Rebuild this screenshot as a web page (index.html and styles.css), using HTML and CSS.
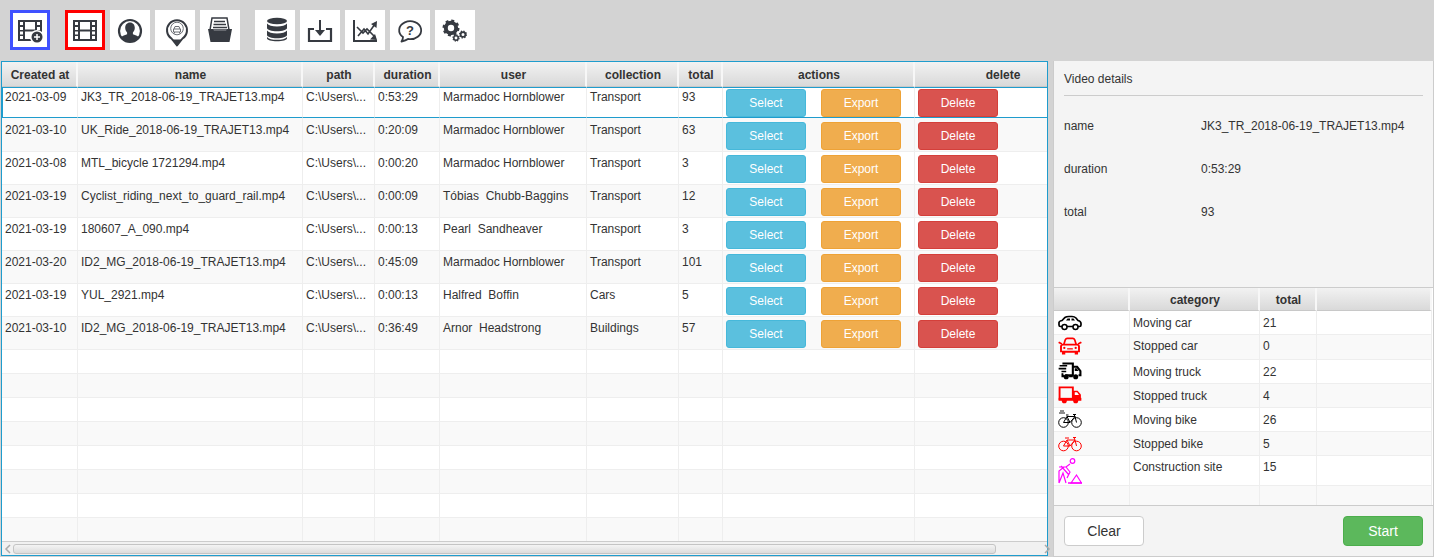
FILE: index.html
```html
<!DOCTYPE html>
<html lang="en">
<head>
<meta charset="utf-8">
<title>Video list</title>
<link rel="stylesheet" href="styles.css">
</head>
<body>
<svg class="defs" width="0" height="0">
  <symbol id="film" viewBox="0 0 40 40">
    <path fill-rule="evenodd" d="M8 10H32V31H8ZM10 12V15H13V12ZM10 17V20H13V17ZM10 21.500V24.500H13V21.500ZM10 26V29H13V26ZM27 12V15H30V12ZM27 17V20H30V17ZM27 21.500V24.500H30V21.500ZM27 26V29H30V26ZM15 12V19.500H25V12ZM15 21.500V29H25V21.500Z"/>
  </symbol>
</svg>
<div class="app">
  <div class="toolbar">
    <div class="tool-group">
      <button class="tool tool-blue"><svg class="ico" viewBox="0 0 40 40"><use href="#film" x="0" y="0" width="40" height="40"/><circle cx="27" cy="27" r="7" fill="#fff"/><circle cx="27" cy="27" r="5.500"/><path d="M27 24V30M24 27H30" stroke="#fff" stroke-width="1.500"/></svg></button>
    </div>
    <div class="tool-group">
      <button class="tool tool-red"><svg class="ico" viewBox="0 0 40 40"><use href="#film" width="40" height="40"/></svg></button>
      <button class="tool"><svg class="ico" viewBox="0 0 40 40"><circle cx="20" cy="21" r="11" fill="none" stroke-width="2.200" class="st"/><path d="M20 12.500c3 0 4.800 2.400 4.800 5.300 0 2-.9 3.700-1.900 4.800v1.600c2.600 1 5.600 2 6.600 3.500A10 10 0 0 1 20 31.300 10 10 0 0 1 10.500 27.700c1-1.500 4-2.500 6.600-3.500v-1.600c-1-1.100-1.900-2.800-1.900-4.800 0-2.900 1.800-5.300 4.800-5.300Z"/></svg></button>
      <button class="tool"><svg class="ico" viewBox="0 0 40 40"><path d="M22 35.500l-5.500-7A10 10 0 1 1 27.500 28.500Z" fill="none" class="st" stroke-width="2" stroke-linejoin="round"/><path d="M22 35.500l-4.500-6h9Z"/><circle cx="22" cy="18.500" r="6.300" fill="none" class="thin" stroke-width="1"/><path d="M19 19L20 16.500H24L25 19M18.500 19H25.500V22H18.500ZM19.500 22V23.500M24.500 22V23.500" fill="none" class="thin" stroke-width="1"/></svg></button>
      <button class="tool"><svg class="ico" viewBox="0 0 40 40"><path d="M12 8H27L29 20H10Z" fill="none" class="st" stroke-width="1.500"/><path d="M14 11.500H25M13.500 14.500H26M13 17.500H27" class="st" stroke-width="1.300"/><path d="M8 19H13L14 21H26L27 19H32L29.500 32H10.500Z"/></svg></button>
    </div>
    <div class="tool-group">
      <button class="tool"><svg class="ico" viewBox="0 0 40 40"><ellipse cx="22" cy="11" rx="10" ry="3.300"/><path d="M12 13.500c1.500 2 5 3 10 3s8.500-1 10-3V18c0 1.700-4.500 3.300-10 3.300S12 19.700 12 18ZM12 20.500c1.500 2 5 3 10 3s8.500-1 10-3V25c0 1.700-4.500 3.300-10 3.300S12 26.700 12 25ZM12 27c1.500 2 5 2.800 10 2.800s8.500-.8 10-2.800v1.500c0 1.500-4.500 2.800-10 2.800s-10-1.300-10-2.800Z"/></svg></button>
      <button class="tool"><svg class="ico" viewBox="0 0 40 40"><path d="M14 19H9V31H31V19H26" fill="none" class="st" stroke-width="2.200"/><path d="M20 10V22" class="st" stroke-width="2"/><path d="M15 20H25L20 26Z"/></svg></button>
      <button class="tool"><svg class="ico" viewBox="0 0 40 40"><path d="M9 10V31H32" fill="none" class="st" stroke-width="2"/><path d="M12 17L18 23L22 19L30 27M13 26L19 19L23 24L30 14" fill="none" class="st" stroke-width="1.600"/><path d="M32 11L31.500 18L26 14ZM32 30L25 29.500L30 24Z"/></svg></button>
      <button class="tool"><svg class="ico" viewBox="0 0 40 40"><path d="M13 27A11 9 0 1 1 18 29C16 30.500 14 31 11.500 31.500C12.500 30 13 29 13 27Z" fill="none" class="st" stroke-width="1.800" stroke-linejoin="round"/><text x="20" y="25" class="qmark">?</text></svg></button>
      <button class="tool"><svg class="ico" viewBox="0 0 40 40"><circle cx="16" cy="18" r="5.200" fill="none" class="st" stroke-width="4"/><circle cx="16" cy="18" r="7" fill="none" class="st" stroke-width="3" stroke-dasharray="2.800 2.700"/><circle cx="28" cy="24.500" r="2.400" fill="none" class="st" stroke-width="1.800"/><circle cx="28" cy="24.500" r="3.300" fill="none" class="st" stroke-width="1.500" stroke-dasharray="1.300 1.290"/><circle cx="21" cy="28" r="2.200" fill="none" class="st" stroke-width="1.500"/><circle cx="21" cy="28" r="3" fill="none" class="st" stroke-width="1.300" stroke-dasharray="1.200 1.150"/></svg></button>
    </div>
  </div>

  <div class="main">
    <section class="list-pane">
      <div class="table-clip">
        <table class="grid video-table">
          <colgroup>
            <col class="c-date"><col class="c-name"><col class="c-path"><col class="c-dur"><col class="c-user"><col class="c-coll"><col class="c-total"><col class="c-actions"><col class="c-delete">
          </colgroup>
          <thead>
            <tr><th>Created at</th><th>name</th><th>path</th><th>duration</th><th>user</th><th>collection</th><th>total</th><th>actions</th><th>delete</th></tr>
          </thead>
          <tbody>
            <tr class="row selected"><td>2021-03-09</td><td>JK3_TR_2018-06-19_TRAJET13.mp4</td><td>C:\Users\...</td><td>0:53:29</td><td>Marmadoc Hornblower</td><td>Transport</td><td>93</td><td class="btns"><div class="pair"><button class="btn info">Select</button><button class="btn warn">Export</button></div></td><td class="btns"><button class="btn danger">Delete</button></td></tr>
            <tr class="row"><td>2021-03-10</td><td>UK_Ride_2018-06-19_TRAJET13.mp4</td><td>C:\Users\...</td><td>0:20:09</td><td>Marmadoc Hornblower</td><td>Transport</td><td>63</td><td class="btns"><div class="pair"><button class="btn info">Select</button><button class="btn warn">Export</button></div></td><td class="btns"><button class="btn danger">Delete</button></td></tr>
            <tr class="row"><td>2021-03-08</td><td>MTL_bicycle 1721294.mp4</td><td>C:\Users\...</td><td>0:00:20</td><td>Marmadoc Hornblower</td><td>Transport</td><td>3</td><td class="btns"><div class="pair"><button class="btn info">Select</button><button class="btn warn">Export</button></div></td><td class="btns"><button class="btn danger">Delete</button></td></tr>
            <tr class="row"><td>2021-03-19</td><td>Cyclist_riding_next_to_guard_rail.mp4</td><td>C:\Users\...</td><td>0:00:09</td><td>Tóbias&nbsp; Chubb-Baggins</td><td>Transport</td><td>12</td><td class="btns"><div class="pair"><button class="btn info">Select</button><button class="btn warn">Export</button></div></td><td class="btns"><button class="btn danger">Delete</button></td></tr>
            <tr class="row"><td>2021-03-19</td><td>180607_A_090.mp4</td><td>C:\Users\...</td><td>0:00:13</td><td>Pearl&nbsp; Sandheaver</td><td>Transport</td><td>3</td><td class="btns"><div class="pair"><button class="btn info">Select</button><button class="btn warn">Export</button></div></td><td class="btns"><button class="btn danger">Delete</button></td></tr>
            <tr class="row"><td>2021-03-20</td><td>ID2_MG_2018-06-19_TRAJET13.mp4</td><td>C:\Users\...</td><td>0:45:09</td><td>Marmadoc Hornblower</td><td>Transport</td><td>101</td><td class="btns"><div class="pair"><button class="btn info">Select</button><button class="btn warn">Export</button></div></td><td class="btns"><button class="btn danger">Delete</button></td></tr>
            <tr class="row"><td>2021-03-19</td><td>YUL_2921.mp4</td><td>C:\Users\...</td><td>0:00:13</td><td>Halfred&nbsp; Boffin</td><td>Cars</td><td>5</td><td class="btns"><div class="pair"><button class="btn info">Select</button><button class="btn warn">Export</button></div></td><td class="btns"><button class="btn danger">Delete</button></td></tr>
            <tr class="row"><td>2021-03-10</td><td>ID2_MG_2018-06-19_TRAJET13.mp4</td><td>C:\Users\...</td><td>0:36:49</td><td>Arnor&nbsp; Headstrong</td><td>Buildings</td><td>57</td><td class="btns"><div class="pair"><button class="btn info">Select</button><button class="btn warn">Export</button></div></td><td class="btns"><button class="btn danger">Delete</button></td></tr>
            <tr class="empty"><td></td><td></td><td></td><td></td><td></td><td></td><td></td><td></td><td></td></tr>
            <tr class="empty"><td></td><td></td><td></td><td></td><td></td><td></td><td></td><td></td><td></td></tr>
            <tr class="empty"><td></td><td></td><td></td><td></td><td></td><td></td><td></td><td></td><td></td></tr>
            <tr class="empty"><td></td><td></td><td></td><td></td><td></td><td></td><td></td><td></td><td></td></tr>
            <tr class="empty"><td></td><td></td><td></td><td></td><td></td><td></td><td></td><td></td><td></td></tr>
            <tr class="empty"><td></td><td></td><td></td><td></td><td></td><td></td><td></td><td></td><td></td></tr>
            <tr class="empty"><td></td><td></td><td></td><td></td><td></td><td></td><td></td><td></td><td></td></tr>
            <tr class="empty"><td></td><td></td><td></td><td></td><td></td><td></td><td></td><td></td><td></td></tr>
          </tbody>
        </table>
      </div>
      <div class="hscroll">
        <svg class="arrow" viewBox="0 0 8 12"><path d="M6 2L2 6L6 10" fill="none" stroke="#aaa" stroke-width="1.500"/></svg>
        <div class="thumb"></div>
        <svg class="arrow" viewBox="0 0 8 12"><path d="M2 2L6 6L2 10" fill="none" stroke="#aaa" stroke-width="1.500"/></svg>
      </div>
    </section>

    <aside class="side">
      <div class="details">
        <div class="details-title">Video details</div>
        <dl class="facts">
          <dt>name</dt><dd>JK3_TR_2018-06-19_TRAJET13.mp4</dd>
          <dt>duration</dt><dd>0:53:29</dd>
          <dt>total</dt><dd>93</dd>
        </dl>
      </div>
      <div class="cat-wrap">
        <table class="grid cat-table">
          <colgroup><col class="k-icon"><col class="k-name"><col class="k-total"><col></colgroup>
          <thead><tr><th></th><th>category</th><th>total</th><th></th></tr></thead>
          <tbody>
            <tr class="r24"><td class="ic"><svg class="veh" viewBox="0 0 24 18"><path d="M1 12V9.500C1 8.500 2 8 4 7.500L7 4.500C8 3.700 9 3.500 11 3.500H14C16 3.500 17 4 18 5L20 7.500C22 8 23 9 23 10.500V12C23 13 22.500 13.500 21.500 13.500H2.500C1.500 13.500 1 13 1 12Z" fill="none" stroke="#000" stroke-width="1.700"/><path d="M8 7.500L9.500 5.500H12V7.500ZM13.500 5.500H15.500L17 7.500H13.500Z"/><circle cx="6.500" cy="14" r="2.500" fill="#fff" stroke="#000" stroke-width="1.500"/><circle cx="17.500" cy="14" r="2.500" fill="#fff" stroke="#000" stroke-width="1.500"/></svg></td><td>Moving car</td><td>21</td><td></td></tr>
            <tr class="r25"><td class="ic"><svg class="veh" viewBox="0 0 24 19"><path d="M5.500 8L7 3C7.500 2 8 1.500 9 1.500H15C16 1.500 16.500 2 17 3L18.500 8M0 5.500L3.500 7.500M24 5.500L20.500 7.500" fill="none" stroke="#f00" stroke-width="1.800"/><path d="M1.500 10C1.500 8.500 2.500 7 5 7H19C21.500 7 22.500 8.500 22.500 10V16H20.500V18.500H17V16.500H7V18.500H3.500V16H1.500ZM3.500 10V14.500H20.500V10C20.500 9.300 20 9 19 9H5C4 9 3.500 9.300 3.500 10Z" fill="#f00" fill-rule="evenodd"/><circle cx="6" cy="11.500" r="1.200" fill="#f00"/><circle cx="18" cy="11.500" r="1.200" fill="#f00"/><path d="M9 12.500H15" stroke="#f00" stroke-width="1.300"/></svg></td><td class="nudge">Stopped car</td><td class="nudge">0</td><td></td></tr>
            <tr class="r24"><td class="ic"><svg class="veh" viewBox="0 0 24 19"><path d="M4 1.500H15V14H7M15 5H19.500L23 9.500V14H21" fill="none" stroke="#000" stroke-width="2.200"/><path d="M1 4H9M0 7H8M3 10H8" stroke="#000" stroke-width="1.600"/><path d="M17 6.500H19L21 9.500H17Z"/><circle cx="8" cy="15.500" r="2.700"/><circle cx="18" cy="15.500" r="2.700"/><path d="M4 12V15H6M11 15H15" stroke="#000" stroke-width="2"/></svg></td><td>Moving truck</td><td>22</td><td></td></tr>
            <tr class="r24"><td class="ic"><svg class="veh" viewBox="0 0 24 19"><path d="M1 1.500H15V14H1Z" fill="none" stroke="#f00" stroke-width="2"/><path d="M15 5H20L23.500 9V15H15Z" fill="#f00"/><path d="M17 6.500H19.500L21.500 9.500H17Z" fill="#fff"/><path d="M0 12.500H24V15.500H0Z" fill="#f00"/><circle cx="6" cy="15.500" r="2.700" fill="#f00"/><circle cx="18" cy="15.500" r="2.700" fill="#f00"/></svg></td><td>Stopped truck</td><td>4</td><td></td></tr>
            <tr class="r24"><td class="ic"><svg class="veh" viewBox="0 0 24 18" fill="none" stroke="#000" stroke-width="1"><circle cx="5.500" cy="12.500" r="4.800"/><circle cx="18.500" cy="12.500" r="4.800"/><path d="M5.500 12.500L9 6.500H17L18.500 12.500M9 6.500L12 12.500H5.500M17 6.500L12 12.500M16 4.500L17 6.500M15 4.500H18M8 5H10.500"/><path d="M2 1H6M1 3H7" stroke-width=".9"/></svg></td><td>Moving bike</td><td>26</td><td></td></tr>
            <tr class="r24"><td class="ic"><svg class="veh" viewBox="0 0 24 18" fill="none" stroke="#f00" stroke-width="1"><circle cx="5.500" cy="12" r="4.800"/><circle cx="18.500" cy="12" r="4.800"/><path d="M5.500 12L9 6H17L18.500 12M9 6L12 12H5.500M17 6L12 12M7 4H11M16 3.500L17 6M15 3.500H18"/></svg></td><td>Stopped bike</td><td>5</td><td></td></tr>
            <tr class="r30"><td class="ic"><svg class="veh tall" viewBox="0 0 24 26" fill="none" stroke="#f0f" stroke-width="1.200"><circle cx="14.500" cy="3" r="2.300"/><path d="M1 9H8L12 6M3 8L11 17M1 25L5 15L8 25M8 9L12 14L9 20M1 25V13L6 9"/><path d="M13 25L18.500 17L23.500 25Z"/><path d="M10 25H24" stroke-width="1.500"/></svg></td><td class="lift">Construction site</td><td class="lift">15</td><td></td></tr>
            <tr class="r20"><td></td><td></td><td></td><td></td></tr>
          </tbody>
        </table>
      </div>
      <div class="side-foot">
        <button class="act plain">Clear</button>
        <button class="act go">Start</button>
      </div>
    </aside>
  </div>
</div>
</body>
</html>
```

FILE: styles.css
```css
* { box-sizing: border-box; }
html, body { margin: 0; height: 100%; }
body {
  font-family: "Liberation Sans", Arial, sans-serif;
  font-size: 12px;
  color: #333;
  background: #d3d3d3;
  overflow: hidden;
}
button { font-family: inherit; }
.defs { position: absolute; }
.app { display: flex; flex-direction: column; height: 557px; }

.toolbar { display: flex; gap: 15px; height: 61px; padding: 10px 10px 0; flex: none; }
.tool-group { display: flex; gap: 5px; }
.tool {
  width: 40px; height: 40px; padding: 0; border: 0; background: #fff; display: block;
}
.tool-blue { outline: 3px solid #3f51ff; outline-offset: -3px; }
.tool-red { outline: 3px solid #f00; outline-offset: -3px; }
.ico { width: 40px; height: 40px; display: block; fill: #363a41; }
.ico .st { stroke: #363a41; }
.ico .thin { stroke: #6b6e74; }
.qmark { font: bold 13px "Liberation Sans", Arial, sans-serif; text-anchor: middle; fill: #363a41; }

.main { display: flex; flex: 1; min-height: 0; }

.list-pane {
  width: 1047px; margin-left: 1px; margin-bottom: 1px;
  border: 1px solid #1f9ccd; background: #fff;
  display: flex; flex-direction: column; flex: none;
}
.table-clip { flex: 1; overflow: hidden; min-height: 0; }

.grid { border-collapse: separate; border-spacing: 0; table-layout: fixed; }
.video-table { width: 1089px; }
.c-date { width: 76px; }
.c-name { width: 225px; }
.c-path { width: 72px; }
.c-dur { width: 65px; }
.c-user { width: 147px; }
.c-coll { width: 92px; }
.c-total { width: 44px; }
.c-actions { width: 192px; }
.c-delete { width: 176px; }

.grid th {
  height: 25px; padding: 2px 0 0 2px;
  font-size: 12px; font-weight: bold; color: #333; text-align: center;
  background: linear-gradient(#f2f2f2, #d9d9d9);
  border-right: 2px solid #f7f7f7;
  border-bottom: 1px solid #c8c8c8;
  overflow: hidden;
}
.grid td {
  padding: 0 3px; vertical-align: top;
  border-right: 1px solid #eee; border-bottom: 1px solid #eee;
  white-space: nowrap; overflow: hidden;
}
.row td { height: 33px; padding-top: 4px; line-height: 15px; }
.row td.btns { padding: 3px 3px 0; }
.empty td { height: 24px; }
tbody tr:nth-child(even) td { background: #f9f9f9; }

.selected td { border-top: 1px solid #1f9ccd; border-bottom: 1px solid #1f9ccd; padding-top: 2px; height: 31px; }
.selected td:first-child { border-left: 1px solid #1f9ccd; padding-left: 2px; }
.selected td.btns { padding-top: 1px; }
.selected + .row td { height: 34px; padding-top: 5px; }
.selected + .row td.btns { padding-top: 4px; }

.pair { display: flex; gap: 15px; }
.btn {
  width: 80px; height: 28px; padding: 0; display: block;
  font-size: 12px; color: #fff; border-radius: 3px; border: 1px solid;
}
.info { background: #5bc0de; border-color: #46b8da; }
.warn { background: #f0ad4e; border-color: #eea236; }
.danger { background: #d9534f; border-color: #d43f3a; }

.hscroll {
  height: 14px; flex: none; display: flex; align-items: center; gap: 1px; padding: 0 2px;
  background: #f1f1f1; border-top: 1px solid #ccc;
}
.arrow { width: 8px; height: 12px; flex: none; }
.thumb {
  flex: none; width: 983px; height: 10px; margin-right: 46px;
  border: 1px solid #c4c4c4; border-radius: 3px;
  background: linear-gradient(#f4f4f4, #dcdcdc);
}

.side {
  flex: 1; margin-left: 5px; display: flex; flex-direction: column; min-width: 0;
  background: #f4f4f4; border-left: 1px solid #ccc; border-right: 1px solid #ccc; border-bottom: 1px solid #ccc;
}
.details { height: 226px; flex: none; padding: 11px 10px 0; }
.details-title { height: 24px; line-height: 15px; border-bottom: 1px solid #ccc; }
.facts { margin: 0; display: grid; grid-template-columns: 137px 1fr; grid-auto-rows: 43px; padding-top: 23px; }
.facts dt, .facts dd { margin: 0; line-height: 15px; }

.cat-wrap { height: 219px; flex: none; background: #fff; border-top: 1px solid #ccc; border-bottom: 1px solid #ccc; overflow: hidden; }
.cat-table { width: 378px; }
.k-icon { width: 76px; }
.k-name { width: 130px; }
.k-total { width: 57px; }
.cat-table th { height: 23px; padding-top: 1px; }
.cat-table td { line-height: 15px; padding: 5px 3px 0; }
.cat-table td.ic { padding: 2px 3px 0 4px; }
.r24 td { height: 24px; }
.r25 td { height: 25px; }
.r30 td { height: 30px; }
.r20 td { height: 20px; }
.cat-table td.nudge { padding-top: 4px; }
.cat-table td.lift { padding-top: 4px; }
.veh { width: 24px; height: 18px; display: block; }
.veh.tall { height: 26px; }

.side-foot { flex: 1; display: flex; justify-content: space-between; padding: 10px; align-items: flex-start; }
.act {
  width: 80px; height: 30px; padding: 0; font-size: 14px; border-radius: 4px; border: 1px solid;
}
.plain { background: #fff; border-color: #ccc; color: #333; }
.go { background: #5cb85c; border-color: #4cae4c; color: #fff; }
```
